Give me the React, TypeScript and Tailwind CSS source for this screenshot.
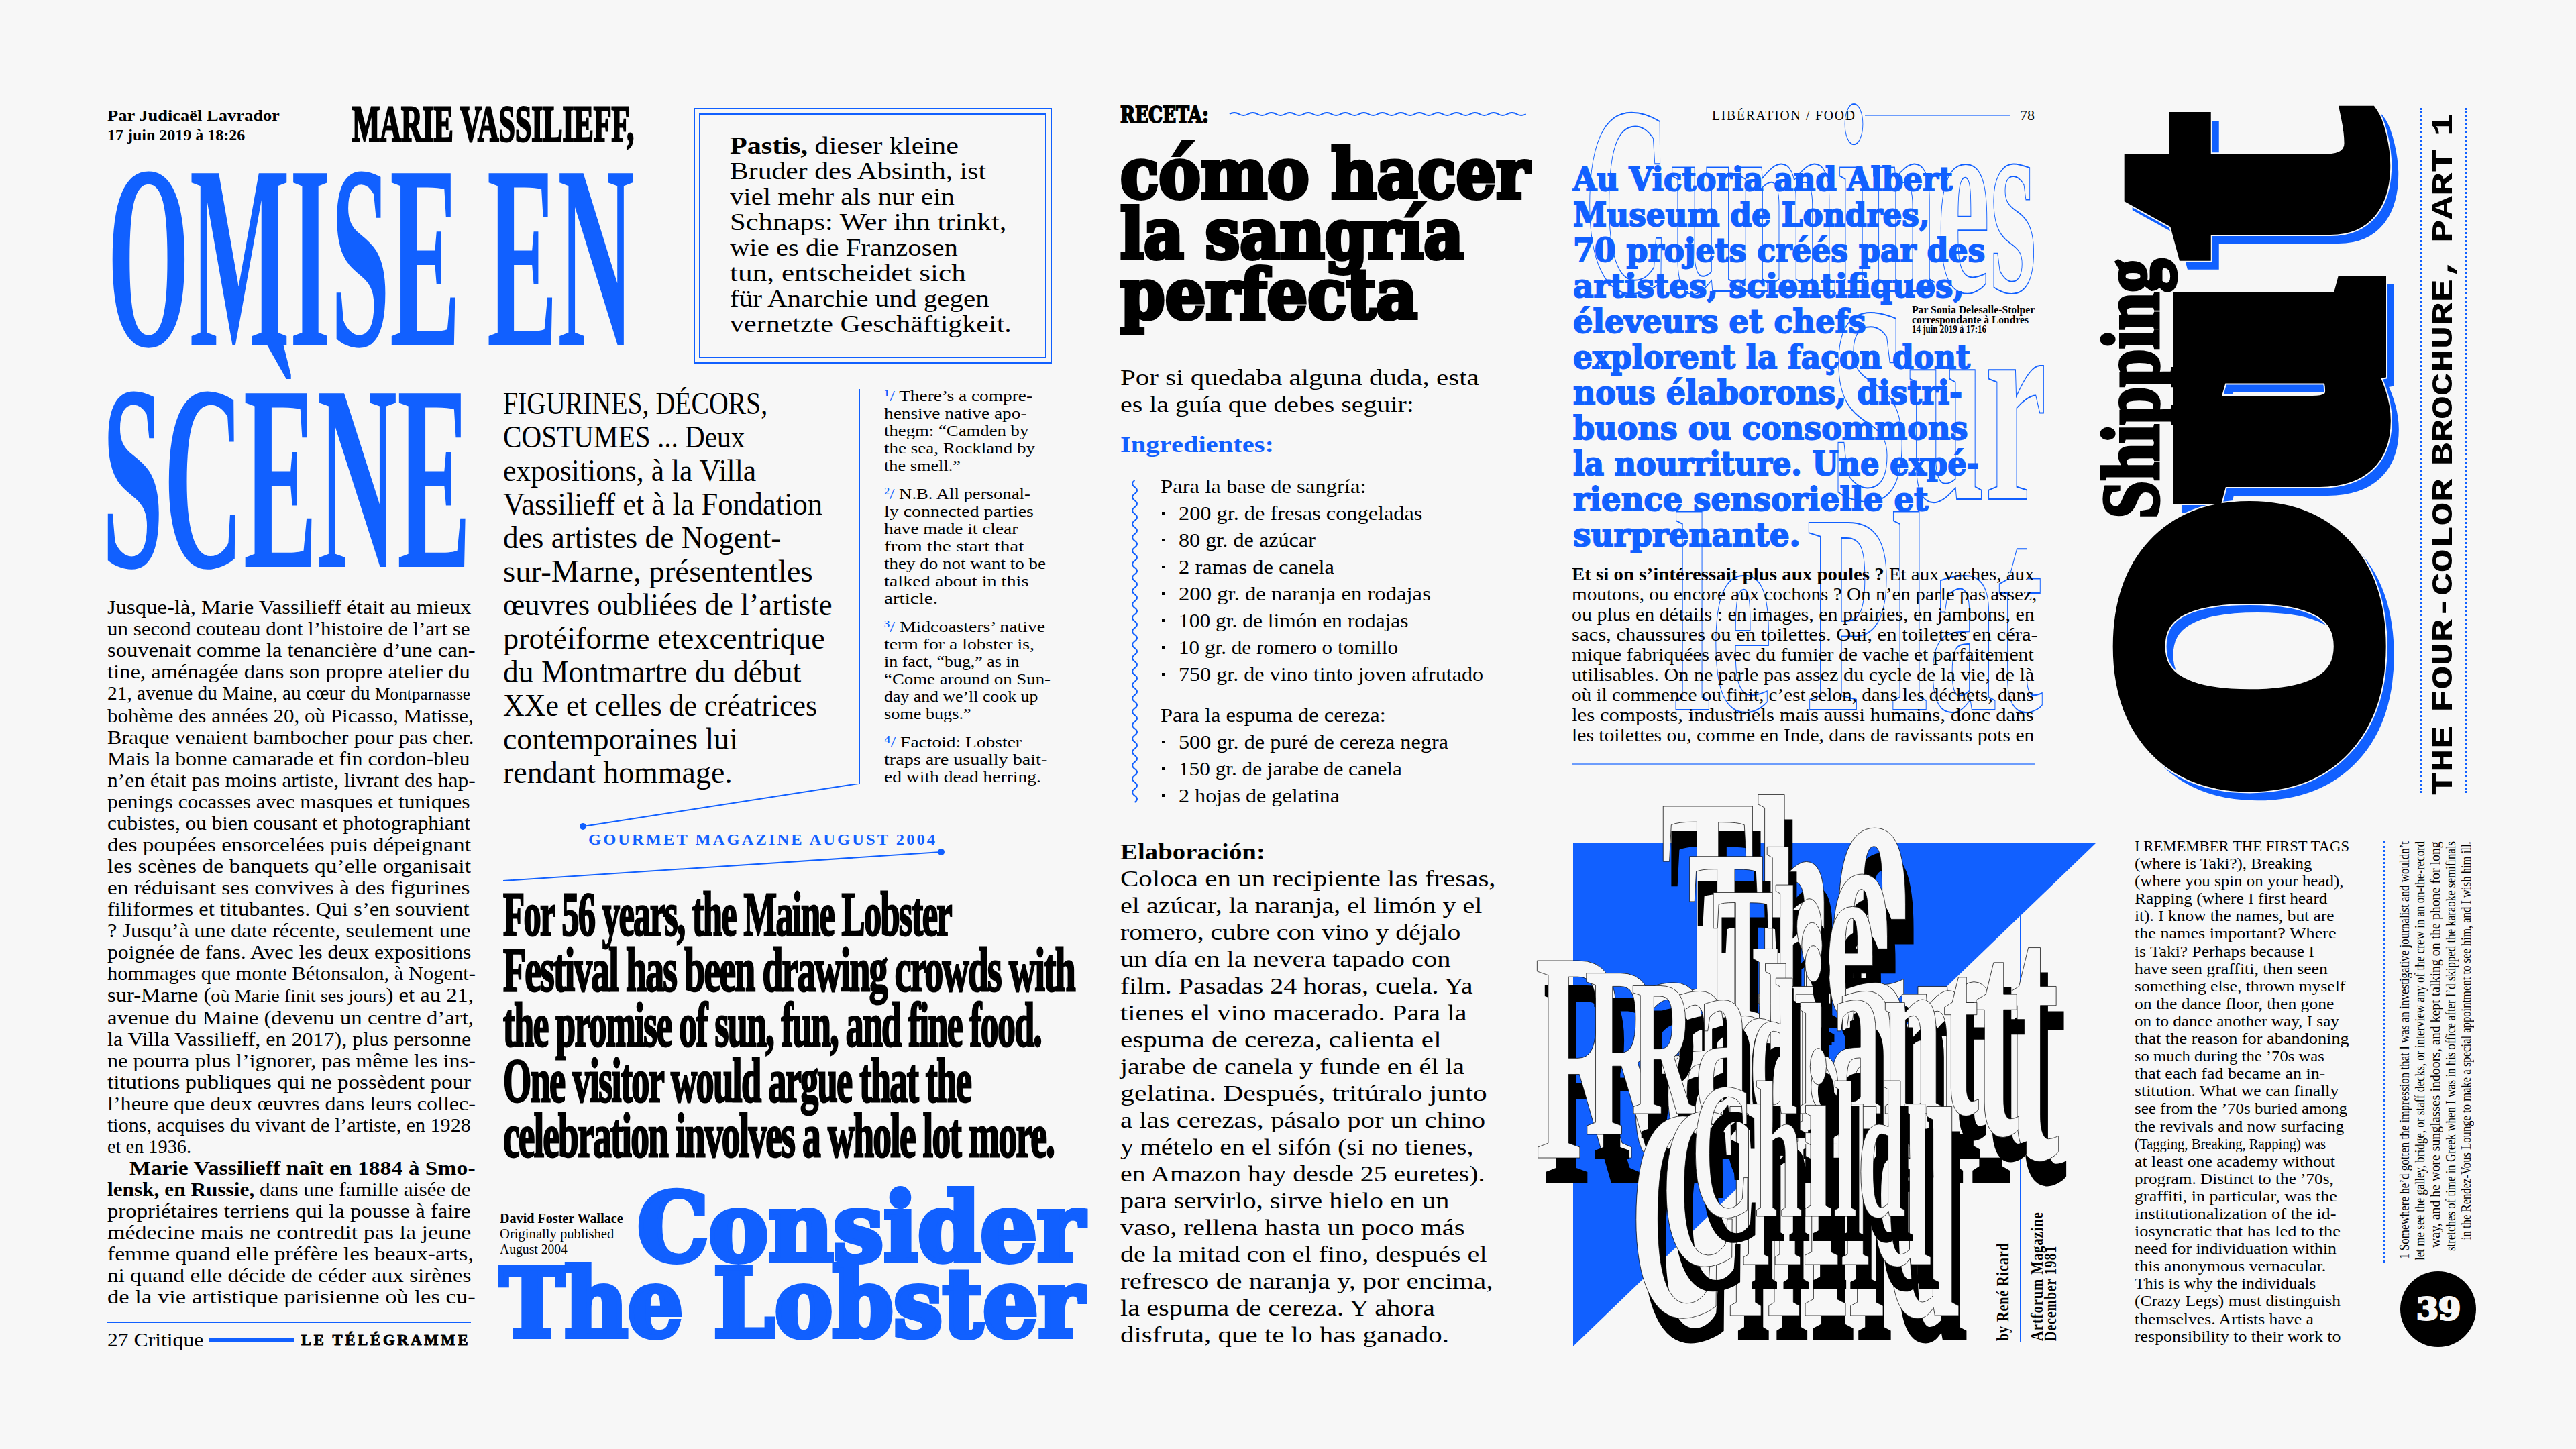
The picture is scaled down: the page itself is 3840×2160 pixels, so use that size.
import React, { useLayoutEffect, useRef } from 'react';

type Row = [React.ReactNode, number];

// squeezes or stretches one line of text to the width it has in the layout
function Fit({ w, className = '', children }: { w: number; className?: string; children: React.ReactNode }) {
  const ref = useRef<HTMLSpanElement>(null);
  useLayoutEffect(() => {
    const el = ref.current;
    if (el) el.style.transform = `scaleX(${w / el.offsetWidth})`;
  }, [w]);
  return (
    <div className={`whitespace-nowrap ${className}`} style={{ width: w }}>
      <span ref={ref} className="inline-block origin-left">{children}</span>
    </div>
  );
}

function Lines({ rows, className }: { rows: Row[]; className: string }) {
  return (
    <>
      {rows.map(([text, w], i) => (
        <Fit key={i} w={w} className={className}>{text}</Fit>
      ))}
    </>
  );
}

// text that reads bottom to top; the wrapper gives the box it fills
function Up({ className = '', height, children }: { className?: string; height?: number; children: React.ReactNode }) {
  return (
    <div className={className} style={height ? { height } : undefined}>
      <div className="absolute left-full bottom-0 origin-bottom-left -rotate-90">{children}</div>
    </div>
  );
}

function wavePath(period: number, amp: number, count: number, vertical = false) {
  let d = vertical ? `M${amp + 1} 1` : `M1 ${amp + 1}`;
  for (let i = 0; i < count; i++) {
    const a = i * period + 1;
    const s = i % 2 === 0 ? -amp : amp;
    d += vertical
      ? ` Q${amp + 1 + s * 2} ${a + period / 2} ${amp + 1} ${a + period}`
      : ` Q${a + period / 2} ${amp + 1 + s * 2} ${a + period} ${amp + 1}`;
  }
  return d;
}

const serif = "[font-family:'Liberation_Serif',serif]";
const heavy = "[font-family:'DejaVu_Serif',serif] font-bold";

const leftBody: Row[] = [
  ['Jusque-là, Marie Vassilieff était au mieux', 543],
  ['un second couteau dont l’histoire de l’art se', 541],
  ['souvenait comme la tenancière d’une can-', 549],
  ['tine, aménagée dans son propre atelier du', 541],
  [<>21, avenue du Maine, au cœur du <span className="text-[25px]">Montparnasse</span></>, 541],
  ['bohème des années 20, où Picasso, Matisse,', 546],
  ['Braque venaient bambocher pour pas cher.', 546],
  ['Mais la bonne camarade et fin cordon-bleu', 541],
  ['n’en était pas moins artiste, livrant des hap-', 549],
  ['penings cocasses avec masques et tuniques', 541],
  ['cubistes, ou bien cousant et photographiant', 541],
  ['des poupées ensorcelées puis dépeignant', 542],
  ['les scènes de banquets qu’elle organisait', 542],
  ['en réduisant ses convives à des figurines', 540],
  ['filiformes et titubantes. Qui s’en souvient', 540],
  ['? Jusqu’à une date récente, seulement une', 542],
  ['poignée de fans. Avec les deux expositions', 542],
  ['hommages que monte Bétonsalon, à Nogent-', 549],
  [<>sur-Marne (<span className="text-[25px]">où Marie finit ses jours</span>) et au 21,</>, 546],
  ['avenue du Maine (devenu un centre d’art,', 546],
  ['la Villa Vassilieff, en 2017), plus personne', 542],
  ['ne pourra plus l’ignorer, pas même les ins-', 549],
  ['titutions publiques qui ne possèdent pour', 542],
  ['l’heure que deux œuvres dans leurs collec-', 549],
  ['tions, acquises du vivant de l’artiste, en 1928', 542],
  ['et en 1936.', 125],
];

const leftBody2: Row[] = [
  [<><b>lensk, en Russie,</b> dans une famille aisée de</>, 542],
  ['propriétaires terriens qui la pousse à faire', 542],
  ['médecine mais ne contredit pas la jeune', 542],
  ['femme quand elle préfère les beaux-arts,', 546],
  ['ni quand elle décide de céder aux sirènes', 542],
  ['de la vie artistique parisienne où les cu-', 549],
];

const pastis: Row[] = [
  [<><b>Pastis,</b> dieser kleine</>, 341],
  ['Bruder des Absinth, ist', 382],
  ['viel mehr als nur ein', 335],
  ['Schnaps: Wer ihn trinkt,', 412],
  ['wie es die Franzosen', 340],
  ['tun, entscheidet sich', 352],
  ['für Anarchie und gegen', 387],
  ['vernetzte Geschäftigkeit.', 420],
];

const figurines: Row[] = [
  ['FIGURINES, DÉCORS,', 394],
  ['COSTUMES ...  Deux', 360],
  ['expositions, à la Villa', 377],
  ['Vassilieff et à la Fondation', 476],
  ['des artistes de Nogent-', 414],
  ['sur-Marne, présententles', 462],
  ['œuvres oubliées de l’artiste', 491],
  ['protéiforme etexcentrique', 480],
  ['du Montmartre du début', 444],
  ['XXe et celles de créatrices', 468],
  ['contemporaines lui', 350],
  ['rendant hommage.', 342],
];

const mark = (n: string) => <span className="text-[#1160ff]">{n}/ </span>;

const notes: Row[][] = [
  [
    [<>{mark('¹')}There’s a compre-</>, 221],
    ['hensive native apo-', 213],
    ['thegm: “Camden by', 215],
    ['the sea, Rockland by', 225],
    ['the smell.”', 114],
  ],
  [
    [<>{mark('²')}N.B. All personal-</>, 218],
    ['ly connected parties', 223],
    ['have made it clear', 199],
    ['from the start that', 208],
    ['they do not want to be', 241],
    ['talked about in this', 215],
    ['article.', 80],
  ],
  [
    [<>{mark('³')}Midcoasters’ native</>, 240],
    ['term for a lobster is,', 224],
    ['in fact, “bug,” as in', 202],
    ['“Come around on Sun-', 248],
    ['day and we’ll cook up', 229],
    ['some bugs.”', 130],
  ],
  [
    [<>{mark('⁴')}Factoid: Lobster</>, 205],
    ['traps are usually bait-', 243],
    ['ed with dead herring.', 234],
  ],
];

const lobster: Row[] = [
  ['For 56 years, the Maine Lobster', 668],
  ['Festival has been drawing crowds with', 852],
  ['the promise of sun, fun, and fine food.', 802],
  ['One visitor would argue that the', 697],
  ['celebration involves a whole lot more.', 821],
];

const base: Row[] = [
  ['200 gr. de fresas congeladas', 363],
  ['80 gr. de azúcar', 204],
  ['2 ramas de canela', 232],
  ['200 gr. de naranja en rodajas', 376],
  ['100 gr. de limón en rodajas', 343],
  ['10 gr. de romero o tomillo', 327],
  ['750 gr. de vino tinto joven afrutado', 454],
];

const espuma: Row[] = [
  ['500 gr. de puré de cereza negra', 402],
  ['150 gr. de jarabe de canela', 333],
  ['2 hojas de gelatina', 240],
];

const elaboracion: Row[] = [
  ['Coloca en un recipiente las fresas,', 559],
  ['el azúcar, la naranja, el limón y el', 539],
  ['romero, cubre con vino y déjalo', 507],
  ['un día en la nevera tapado con', 492],
  ['film. Pasadas 24 horas, cuela. Ya', 526],
  ['tienes el vino macerado. Para la', 516],
  ['espuma de cereza, calienta el', 478],
  ['jarabe de canela y funde en él la', 513],
  ['gelatina. Después, tritúralo junto', 547],
  ['a las cerezas, pásalo por un chino', 544],
  ['y mételo en el sifón (si no tienes,', 526],
  ['en Amazon hay desde 25 euretes).', 544],
  ['para servirlo, sirve hielo en un', 491],
  ['vaso, rellena hasta un poco más', 514],
  ['de la mitad con el fino, después el', 547],
  ['refresco de naranja y, por encima,', 555],
  ['la espuma de cereza. Y ahora', 469],
  ['disfruta, que te lo has ganado.', 490],
];

const libeHead: Row[] = [
  ['Au Victoria and Albert', 566],
  ['Museum de Londres,', 532],
  ['70 projets créés par des', 614],
  ['artistes, scientifiques,', 583],
  ['éleveurs et chefs', 436],
  ['explorent la façon dont', 592],
  ['nous élaborons, distri-', 580],
  ['buons ou consommons', 588],
  ['la nourriture. Une expé-', 605],
  ['rience sensorielle et', 529],
  ['surprenante.', 339],
];

const libeBody: Row[] = [
  [<><b>Et si on s’intéressait plus aux poules ?</b> Et aux vaches, aux</>, 690],
  ['moutons, ou encore aux cochons ? On n’en parle pas assez,', 693],
  ['ou plus en détails : en images, en prairies, en jambons, en', 690],
  ['sacs, chaussures ou en toilettes. Oui, en toilettes en céra-', 695],
  ['mique fabriquées avec du fumier de vache et parfaitement', 689],
  ['utilisables. On ne parle pas assez du cycle de la vie, de là', 689],
  ['où il commence ou finit, c’est selon, dans les déchets, dans', 689],
  ['les composts, industriels mais aussi humains, donc dans', 689],
  ['les toilettes ou, comme en Inde, dans de ravissants pots en', 689],
];

const tags: Row[] = [
  ['I REMEMBER THE FIRST TAGS', 320],
  ['(where is Taki?), Breaking', 265],
  ['(where you spin on your head),', 311],
  ['Rapping (where I first heard', 288],
  ['it). I know the names, but are', 298],
  ['the names important? Where', 301],
  ['is Taki? Perhaps because I', 268],
  ['have seen graffiti, then seen', 288],
  ['something else, thrown myself', 314],
  ['on the dance floor, then gone', 297],
  ['on to dance another way, I say', 305],
  ['that the reason for abandoning', 320],
  ['so much during the ’70s was', 283],
  ['that each fad became an in-', 284],
  ['stitution. What we can finally', 304],
  ['see from the ’70s buried among', 317],
  ['the revivals and now surfacing', 312],
  ['(Tagging, Breaking, Rapping) was', 285],
  ['at least one academy without', 299],
  ['program. Distinct to the ’70s,', 297],
  ['graffiti, in particular, was the', 302],
  ['institutionalization of the id-', 301],
  ['iosyncratic that has led to the', 307],
  ['need for individuation within', 301],
  ['this anonymous vernacular.', 285],
  ['This is why the individuals', 270],
  ['(Crazy Legs) must distinguish', 307],
  ['themselves. Artists have a', 267],
  ['responsibility to their work to', 307],
];

const sideNotes: Row[] = [
  ['1 Somewhere he’d gotten the impression that I was an investigative journalist and wouldn’t', 623],
  ['let me see the galley, bridge, or staff decks, or interview any of the crew in an on-the-record', 625],
  ['way, and he wore sunglasses indoors, and kept talking on the phone for long', 606],
  ['stretches of time in Greek when I was in his office after I’d skipped the karaoke semifinals', 611],
  ['in the Rendez-Vous Lounge to make a special appointment to see him, and I wish him ill.', 594],
];

// layers of the title, back to front, from the column's top left corner
const radiant: { word: string; left: number; top: number; size: number; w: number }[] = [
  { word: 'The', left: 136, top: -20, size: 449, w: 371 },
  { word: 'The', left: 176, top: 70, size: 367, w: 303 },
  { word: 'The', left: 212, top: 138, size: 291, w: 244 },
  { word: 'Radiant', left: -52, top: 210, size: 449, w: 782 },
  { word: 'Radiant', left: 22, top: 244, size: 367, w: 648 },
  { word: 'Radiant', left: 92, top: 277, size: 291, w: 518 },
  { word: 'Child', left: 89, top: 445, size: 449, w: 493 },
  { word: 'Child', left: 136, top: 457, size: 345, w: 404 },
  { word: 'Child', left: 181, top: 430, size: 291, w: 320 },
];

// the big "Out": each letter has its own face and weight
const outLetters = [
  { ch: 'O', font: heavy, size: 472, stroke: 50, lh: 422, w: 423, gap: 22 },
  { ch: 'u', font: `${serif} font-bold`, size: 560, stroke: 60, lh: 380, w: 304, gap: 42 },
  { ch: 't', font: `${serif} font-bold`, size: 640, stroke: 30, lh: 356, w: 214, gap: 0 },
];

function OutWord({ color, extra = 0, className }: { color: string; extra?: number; className: string }) {
  return (
    <div className={`absolute flex items-start ${className}`} style={{ color }}>
      {outLetters.map((l) => (
        <div key={l.ch} style={{ marginRight: l.gap, fontSize: l.size, lineHeight: `${l.lh}px`, WebkitTextStroke: `${l.stroke + extra}px ${color}` }}>
          <Fit w={l.w} className={l.font}>{l.ch}</Fit>
        </div>
      ))}
    </div>
  );
}

function Caption({ children, w, className }: { children: React.ReactNode; w: number; className: string }) {
  return (
    <Up className={className}>
      <Fit w={w} className={`${serif} font-bold text-[25px] leading-[26px] tracking-[1px]`}>{children}</Fit>
    </Up>
  );
}

export default function App() {
  return (
    <div className="flex items-start w-[3840px] h-[2160px] overflow-hidden bg-[#f7f7f7] text-black pl-[160px] pt-[158px]">
      {/* Critique + Gourmet */}
      <div className="w-[1510px] shrink-0">
        <div className="flex h-[384px]">
          <div className="w-[874px] shrink-0">
            <div className="flex h-[95px]">
              <div className={`${serif} font-bold text-[24px] leading-[29px] w-[365px]`}>
                <Fit w={257}>Par Judicaël Lavrador</Fit>
                <Fit w={205}>17 juin 2019 à 18:26</Fit>
              </div>
              <Fit w={420} className={`${serif} font-bold text-[76px] leading-[60px] -mt-[4px] text-black [-webkit-text-stroke:3px_#000]`}>
                MARIE VASSILIEFF,
              </Fit>
            </div>
            <Fit w={785} className={`${serif} font-bold text-[392px] leading-[260px] text-[#1160ff]`}>OMISE EN</Fit>
          </div>
          <div className="mt-[3px] h-[381px] w-[534px] border-2 border-[#1160ff] p-[6px]">
            <div className="h-full border-2 border-[#1160ff] pl-[44px] pt-[27px]">
              <Lines rows={pastis} className={`${serif} text-[36px] leading-[38px]`} />
            </div>
          </div>
        </div>

        <div className="flex mt-[40px]">
          <div className="w-[590px] shrink-0">
            <Fit w={550} className={`${serif} font-bold text-[395px] leading-[260px] text-[#1160ff] -ml-[8px]`}>SCÈNE</Fit>
            <div className="mt-[47px]">
              <Lines rows={leftBody} className={`${serif} text-[29px] leading-[32px]`} />
              <Fit w={516} className={`${serif} font-bold text-[29px] leading-[32px] ml-[33px]`}>
                Marie Vassilieff naît en 1884 à Smo-
              </Fit>
              <Lines rows={leftBody2} className={`${serif} text-[29px] leading-[32px]`} />
            </div>
            <div className="mt-[21px] w-[542px] border-t-2 border-[#1160ff] flex items-center h-[52px]">
              <Fit w={143} className={`${serif} text-[29px] leading-[32px]`}>27  Critique</Fit>
              <div className="ml-[9px] w-[127px] h-[5px] bg-[#1160ff]" />
              <Fit w={252} className={`${serif} font-bold text-[24px] leading-[32px] tracking-[4px] ml-[10px] [-webkit-text-stroke:1px_#000]`}>LE TÉLÉGRAMME</Fit>
            </div>
          </div>

          <div className="w-[870px] shrink-0 -mt-[6px]">
            <div className="flex h-[600px]">
              <div className="w-[530px] shrink-0">
                <Lines rows={figurines} className={`${serif} text-[47px] leading-[50px]`} />
              </div>
              <div className="w-0 h-[588px] mt-[4px] border-l-2 border-[#1160ff]" />
              <div className="ml-[36px] pt-[1px]">
                {notes.map((group, i) => (
                  <div key={i} className="mb-[16px]">
                    <Lines rows={group} className={`${serif} text-[24px] leading-[26px]`} />
                  </div>
                ))}
              </div>
            </div>

            <div className="relative h-[145px] -mt-[8px] pt-[68px] pl-[127px]">
              <svg className="absolute left-0 top-0" width="660" height="145" fill="none" stroke="#1160ff" strokeWidth="2">
                <path d="M530 0 L119 64" />
                <path d="M653 102 L0 145" />
                <circle cx="119" cy="64" r="4" fill="#1160ff" />
                <circle cx="653" cy="102" r="4" fill="#1160ff" />
              </svg>
              <Fit w={520} className={`${serif} font-bold text-[24px] leading-[30px] tracking-[3px] text-[#1160ff]`}>
                GOURMET MAGAZINE AUGUST 2004
              </Fit>
            </div>

            <div className="mt-[8px]">
              <Lines rows={lobster} className={`${serif} font-bold text-[94px] leading-[82.5px] tracking-[-3px] [-webkit-text-stroke:3px_#000]`} />
            </div>

            <div className="flex h-[110px] mt-[41px] -ml-[5px]">
              <div className={`${serif} text-[21px] leading-[23px] pt-[30px] w-[205px] shrink-0`}>
                <Fit w={184} className="font-bold">David Foster Wallace</Fit>
                <Fit w={170}>Originally published</Fit>
                <Fit w={101}>August 2004</Fit>
              </div>
              <Fit w={666} className={`${heavy} text-[140px] leading-[110px] text-[#1160ff] [-webkit-text-stroke:8px_#1160ff]`}>Consider</Fit>
            </div>
            <Fit w={871} className={`${heavy} text-[140px] leading-[110px] text-[#1160ff] [-webkit-text-stroke:8px_#1160ff] -ml-[5px] mt-[3px]`}>The Lobster</Fit>
          </div>
        </div>
      </div>

      {/* Receta */}
      <div className="w-[670px] shrink-0">
        <div className="flex items-center h-[28px]">
          <Fit w={132} className={`${heavy} text-[33px] leading-[28px] [-webkit-text-stroke:2px_#000]`}>RECETA:</Fit>
          <svg className="ml-[30px]" width="445" height="10" fill="none" stroke="#1160ff" strokeWidth="2">
            <path d={wavePath(13.8, 2, 32)} />
          </svg>
        </div>
        <div className="mt-[28px]">
          <Lines
            rows={[['cómo hacer', 610], ['la sangría', 512], ['perfecta', 443]]}
            className={`${heavy} text-[102px] leading-[90px] [-webkit-text-stroke:6px_#000]`}
          />
        </div>
        <div className="mt-[59px]">
          <Lines
            rows={[['Por si quedaba alguna duda, esta', 535], ['es la guía que debes seguir:', 438]]}
            className={`${serif} text-[34px] leading-[40px]`}
          />
        </div>
        <Fit w={229} className={`${serif} font-bold text-[34px] leading-[40px] text-[#1160ff] mt-[20px]`}>Ingredientes:</Fit>

        <div className="flex mt-[22px]">
          <svg className="ml-[17px] mt-[10px] shrink-0" width="12" height="484" fill="none" stroke="#1160ff" strokeWidth="2">
            <path d={wavePath(10, 3.5, 48, true)} />
          </svg>
          <div className="ml-[31px]">
            <Fit w={307} className={`${serif} text-[30px] leading-[40px]`}>Para la base de sangría:</Fit>
            {base.map(([t, w], i) => (
              <div key={i} className="flex items-center h-[40px]">
                <div className="w-[4px] h-[4px] bg-black mr-[21px] ml-[2px]" />
                <Fit w={w} className={`${serif} text-[30px] leading-[40px]`}>{t}</Fit>
              </div>
            ))}
            <Fit w={336} className={`${serif} text-[30px] leading-[40px] mt-[21px]`}>Para la espuma de cereza:</Fit>
            {espuma.map(([t, w], i) => (
              <div key={i} className="flex items-center h-[40px]">
                <div className="w-[4px] h-[4px] bg-black mr-[21px] ml-[2px]" />
                <Fit w={w} className={`${serif} text-[30px] leading-[40px]`}>{t}</Fit>
              </div>
            ))}
          </div>
        </div>

        <Fit w={216} className={`${serif} font-bold text-[34px] leading-[40px] mt-[44px]`}>Elaboración:</Fit>
        <Lines rows={elaboracion} className={`${serif} text-[34px] leading-[40px]`} />
      </div>

      {/* Libération + Radiant Child */}
      <div className="relative w-[790px] shrink-0">
        <div className="absolute left-[21px] -top-[60px] text-transparent [-webkit-text-stroke:2px_#1160ff]">
          <Fit w={675} className={`${serif} font-bold text-[402px] leading-[402px]`}>Cumines</Fit>
        </div>
        <div className="absolute left-[389px] top-[235px] text-transparent [-webkit-text-stroke:2px_#1160ff]">
          <Fit w={322} className={`${serif} font-bold text-[420px] leading-[420px]`}>Sur</Fit>
        </div>
        <div className="absolute left-[154px] top-[543px] text-transparent [-webkit-text-stroke:2px_#1160ff]">
          <Fit w={551} className={`${serif} font-bold text-[426px] leading-[426px]`}>le Plat</Fit>
        </div>

        <div className="relative flex items-center h-[28px] pl-[212px]">
          <Fit w={215} className={`${serif} text-[22px] leading-[28px] tracking-[2px]`}>LIBÉRATION / FOOD</Fit>
          <div className="ml-[13px] w-[217px] h-[2px] bg-[#1160ff] opacity-60" />
          <Fit w={22} className={`${serif} text-[22px] leading-[28px] ml-[14px]`}>78</Fit>
        </div>

        <div className="relative mt-[55px] pl-[5px]">
          <Lines rows={libeHead} className={`${heavy} text-[48px] leading-[53px] text-[#1160ff] [-webkit-text-stroke:2px_#1160ff]`} />
          <div className={`absolute left-[510px] top-[214px] ${serif} font-bold text-[16px] leading-[14.5px]`}>
            <Fit w={183}>Par Sonia Delesalle-Stolper</Fit>
            <Fit w={174}>correspondante à Londres</Fit>
            <Fit w={111}>14 juin 2019 à 17:16</Fit>
          </div>
        </div>

        <div className="relative mt-[17px] pl-[3px]">
          <Lines rows={libeBody} className={`${serif} text-[27px] leading-[30px]`} />
          <div className="mt-[27px] w-[690px] h-[2px] bg-[#1160ff] opacity-60" />
        </div>

        <div className="relative h-[880px] w-[790px]">
          <svg className="absolute left-0 top-0" width="790" height="880" fill="#1160ff">
            <polygon points="5,116 785,116 5,867" />
            <rect x="671" y="224" width="2" height="636" />
          </svg>
          {radiant.map((l, i) => (
            <div
              key={i}
              className="absolute text-[#f7f7f7] [-webkit-text-stroke:1px_#000] [text-shadow:26px_37px_0_#000]"
              style={{ left: l.left, top: l.top }}
            >
              <Fit w={l.w} className={`${serif} font-bold`}>
                <span style={{ fontSize: l.size, lineHeight: `${l.size}px` }}>
                  {l.word.split('').map((ch, j) =>
                    /[aeint]/.test(ch) ? (
                      <span key={j} className="leading-[0]" style={{ fontSize: l.size * 1.24 }}>{ch}</span>
                    ) : (
                      <span key={j}>{ch}</span>
                    ),
                  )}
                </span>
              </Fit>
            </div>
          ))}
          <Caption w={147} className="absolute left-[633px] top-[712px] w-[26px] h-[147px]">by René Ricard</Caption>
          <Caption w={193} className="absolute left-[684px] top-[666px] w-[26px] h-[193px]">Artforum Magazine</Caption>
          <Caption w={142} className="absolute left-[704px] top-[717px] w-[26px] h-[142px]">December 1981</Caption>
        </div>
      </div>

      {/* Four-color brochure */}
      <div className="w-[590px] shrink-0">
        <div className="flex h-[1021px] mt-[3px]">
          <div className="relative w-[478px] shrink-0">
            <Up className="absolute left-[18px] -top-[1px] w-[420px] h-[1015px]">
              <div className="relative h-[420px] w-[1015px]">
                <OutWord color="#1160ff" className="left-[-13px] top-[12px]" />
                <OutWord color="#f7f7f7" extra={4} className="left-0 top-0" />
                <OutWord color="#000000" className="left-0 top-0" />
              </div>
            </Up>
            <Up className="absolute -left-[8px] top-[225px] w-[110px] h-[387px]">
              <Fit w={387} className={`${serif} font-bold text-[120px] leading-[110px] [-webkit-text-stroke:5px_#000]`}>Shipping</Fit>
            </Up>
          </div>
          <div className="relative w-[70px] border-l-[3px] border-r-[3px] border-dotted border-[#1160ff]">
            <Up className="absolute left-0 top-[7px] w-[64px] h-[1018px]">
              <Fit w={1018} className="[font-family:'Liberation_Mono',monospace] font-bold text-[44px] leading-[64px] [word-spacing:-12px]">
                THE FOUR-COLOR BROCHURE, PART 1
              </Fit>
            </Up>
          </div>
        </div>

        <div className="flex mt-[67px] pl-[52px]">
          <div className="w-[371px] shrink-0">
            <Lines rows={tags} className={`${serif} text-[23px] leading-[26.1px]`} />
          </div>
          <div className="mt-[5px]">
            <div className="flex items-start h-[628px] border-l-[3px] border-dotted border-[#1160ff] pl-[17px]">
              {sideNotes.map(([t, w], i) => (
                <Up key={i} height={w} className="relative w-[23px] shrink-0">
                  <Fit w={w} className={`${serif} text-[21px] leading-[23px]`}>{t}</Fit>
                </Up>
              ))}
            </div>
            <div className="flex items-center justify-center w-[113px] h-[113px] mt-[13px] ml-[25px] rounded-full bg-black">
              <Fit w={66} className={`${heavy} text-[44px] leading-[50px] text-[#f7f7f7] [-webkit-text-stroke:3px_#f7f7f7]`}>39</Fit>
            </div>
          </div>
        </div>
      </div>
    </div>
  );
}
